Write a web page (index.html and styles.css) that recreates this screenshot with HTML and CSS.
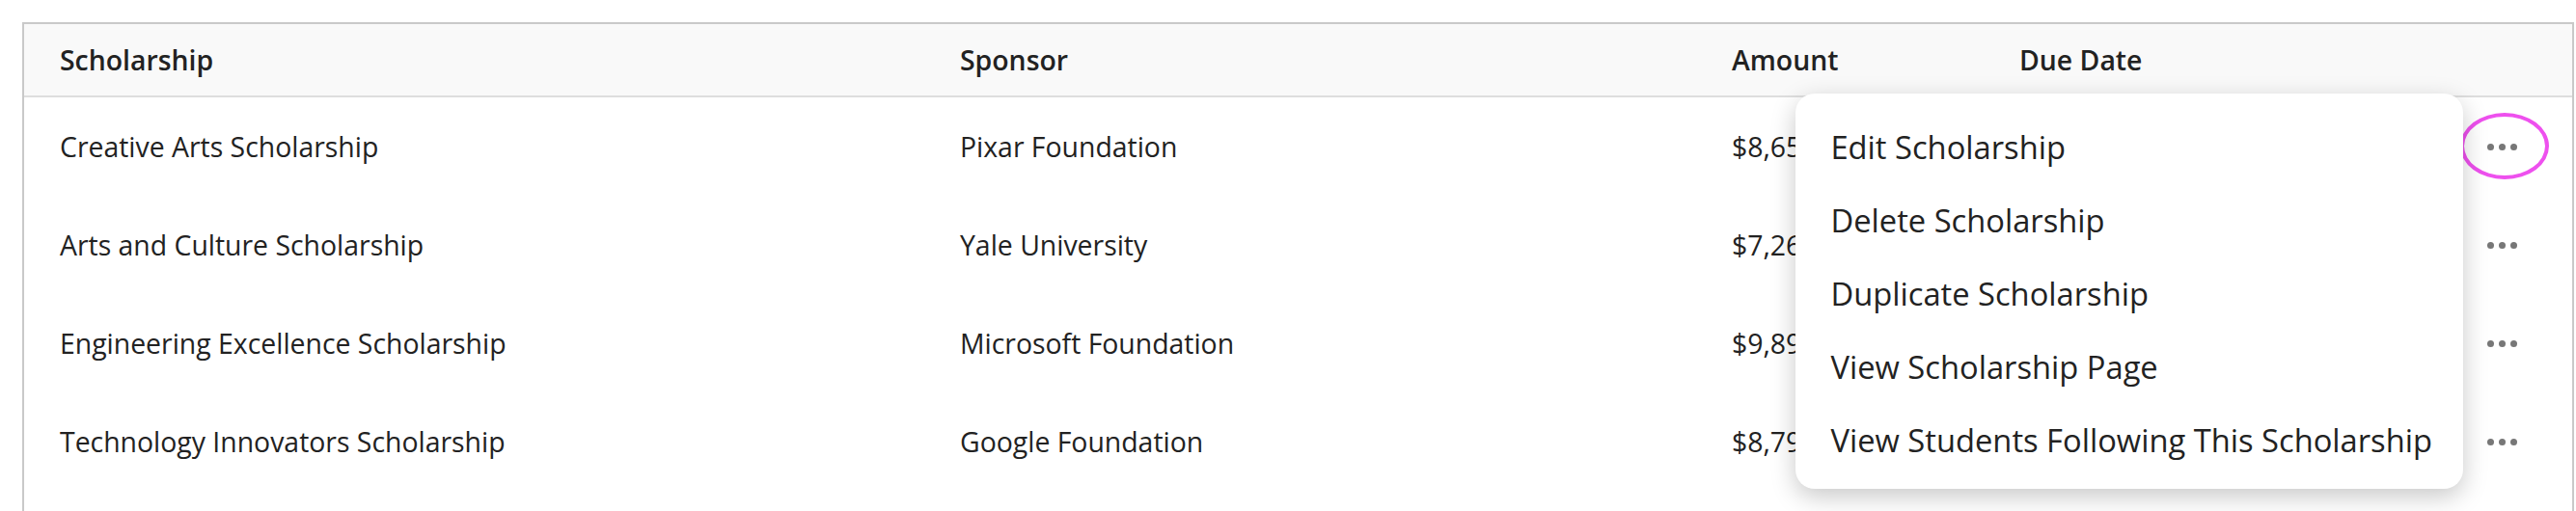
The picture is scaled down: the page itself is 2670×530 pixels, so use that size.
FILE: index.html
```html
<!DOCTYPE html>
<html>
<head>
<meta charset="utf-8">
<link rel="stylesheet" href="styles.css">
</head>
<body>
<div class="table">
  <div class="row head">
    <div class="cell">Scholarship</div>
    <div class="cell">Sponsor</div>
    <div class="cell">Amount</div>
    <div class="cell">Due Date</div>
    <div class="cell"></div>
  </div>
  <div class="row">
    <div class="cell">Creative Arts Scholarship</div>
    <div class="cell">Pixar Foundation</div>
    <div class="cell">$8,650</div>
    <div class="cell">Mar 15, 2024</div>
    <div class="cell actions">
      <span class="dots"><i></i><i></i><i></i></span>
      <span class="ring"></span>
      <div class="menu">
        <div class="item">Edit Scholarship</div>
        <div class="item">Delete Scholarship</div>
        <div class="item">Duplicate Scholarship</div>
        <div class="item">View Scholarship Page</div>
        <div class="item">View Students Following This Scholarship</div>
      </div>
    </div>
  </div>
  <div class="row">
    <div class="cell">Arts and Culture Scholarship</div>
    <div class="cell">Yale University</div>
    <div class="cell">$7,260</div>
    <div class="cell">Apr 1, 2024</div>
    <div class="cell actions"><span class="dots"><i></i><i></i><i></i></span></div>
  </div>
  <div class="row">
    <div class="cell">Engineering Excellence Scholarship</div>
    <div class="cell">Microsoft Foundation</div>
    <div class="cell">$9,890</div>
    <div class="cell">Apr 30, 2024</div>
    <div class="cell actions"><span class="dots"><i></i><i></i><i></i></span></div>
  </div>
  <div class="row">
    <div class="cell">Technology Innovators Scholarship</div>
    <div class="cell">Google Foundation</div>
    <div class="cell">$8,790</div>
    <div class="cell">May 20, 2024</div>
    <div class="cell actions"><span class="dots"><i></i><i></i><i></i></span></div>
  </div>
</div>
</body>
</html>
```

FILE: styles.css
```css
html, body {
  margin: 0;
  padding: 0;
  background: #ffffff;
}

body {
  font-family: "Open Sans", "Noto Sans", sans-serif;
  color: #222222;
  overflow: hidden;
}

.table {
  margin: 23px 2px 0 23px;
  border: 2px solid #c9c9c9;
  padding-bottom: 60px;
}

.row {
  box-sizing: border-box;
  display: grid;
  grid-template-columns: 933px 800px 298px 1fr 80px;
  padding: 0 33px 0 37px;
  height: 102px;
  align-items: center;
  font-size: 28.4px;
}

.row.head {
  height: 76px;
  background: #f9f9f9;
  border-bottom: 2px solid #dedede;
  font-weight: 600;
  color: #222222;
}

.cell {
  white-space: nowrap;
}

.actions {
  position: relative;
  height: 100%;
  display: flex;
  align-items: center;
  justify-content: center;
}

.dots {
  display: flex;
  gap: 5px;
}

.dots i {
  display: block;
  width: 7px;
  height: 7px;
  border-radius: 50%;
  background: #777777;
}

.ring {
  position: absolute;
  left: 50%;
  top: 50%;
  width: 84px;
  height: 61px;
  margin-left: -43px;
  margin-top: -35px;
  border: 4px solid #ee50ee;
  border-radius: 50%;
}

.menu {
  position: absolute;
  right: 100%;
  top: -4px;
  background: #ffffff;
  border-radius: 20px;
  padding: 17px 32px 13px 36px;
  box-shadow: 0 8px 26px rgba(0, 0, 0, 0.22);
  font-size: 32.7px;
  color: #222222;
  z-index: 2;
}

.item {
  height: 76px;
  display: flex;
  align-items: center;
  white-space: nowrap;
}
```
